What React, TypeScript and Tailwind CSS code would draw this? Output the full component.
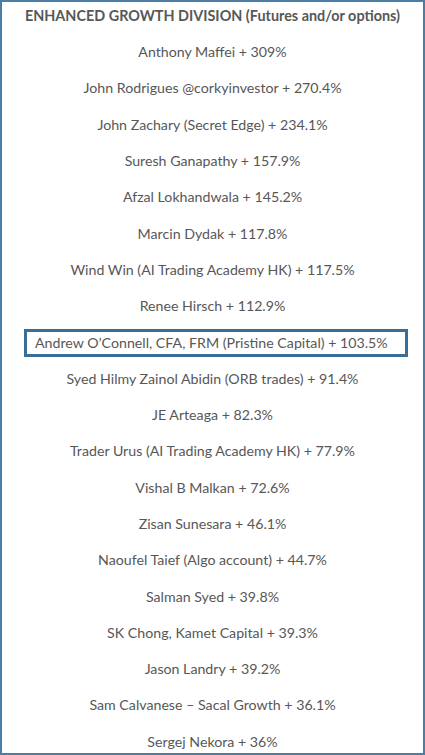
const rows = [
  'Anthony Maffei + 309%',
  'John Rodrigues @corkyinvestor + 270.4%',
  'John Zachary (Secret Edge) + 234.1%',
  'Suresh Ganapathy + 157.9%',
  'Afzal Lokhandwala + 145.2%',
  'Marcin Dydak + 117.8%',
  'Wind Win (AI Trading Academy HK) + 117.5%',
  'Renee Hirsch + 112.9%',
  'Andrew O\u2019Connell, CFA, FRM (Pristine Capital) + 103.5%',
  'Syed Hilmy Zainol Abidin (ORB trades) + 91.4%',
  'JE Arteaga + 82.3%',
  'Trader Urus (AI Trading Academy HK) + 77.9%',
  'Vishal B Malkan + 72.6%',
  'Zisan Sunesara + 46.1%',
  'Naoufel Taief (Algo account) + 44.7%',
  'Salman Syed + 39.8%',
  'SK Chong, Kamet Capital + 39.3%',
  'Jason Landry + 39.2%',
  'Sam Calvanese \u2013 Sacal Growth + 36.1%',
  'Sergej Nekora + 36%',
];

export default function App() {
  return (
    <div className="w-[425px] h-[755px] bg-white">
      <div
        className="h-full border-2 border-[#4a7ea6] overflow-hidden text-[#575757] text-[14.2px]"
        style={{ fontFamily: 'Lato, "Open Sans", sans-serif' }}
      >
        <div className="h-[32px] pt-[3px] text-center font-bold leading-[22px] text-[14.4px]">
          ENHANCED GROWTH DIVISION (Futures and/or options)
        </div>
        {rows.map((r, i) =>
          i === 8 ? (
            <div key={r} className="h-[36.3px] flex items-center justify-center">
              <span className="w-[384px] ml-[7px] h-[28px] border-[3px] border-[#3a6e96] flex items-center pl-[8px] leading-[20px]">
                {r}
              </span>
            </div>
          ) : (
            <div key={r} className="h-[36.3px] flex items-center justify-center leading-[22px]">
              {r}
            </div>
          )
        )}
      </div>
    </div>
  );
}
